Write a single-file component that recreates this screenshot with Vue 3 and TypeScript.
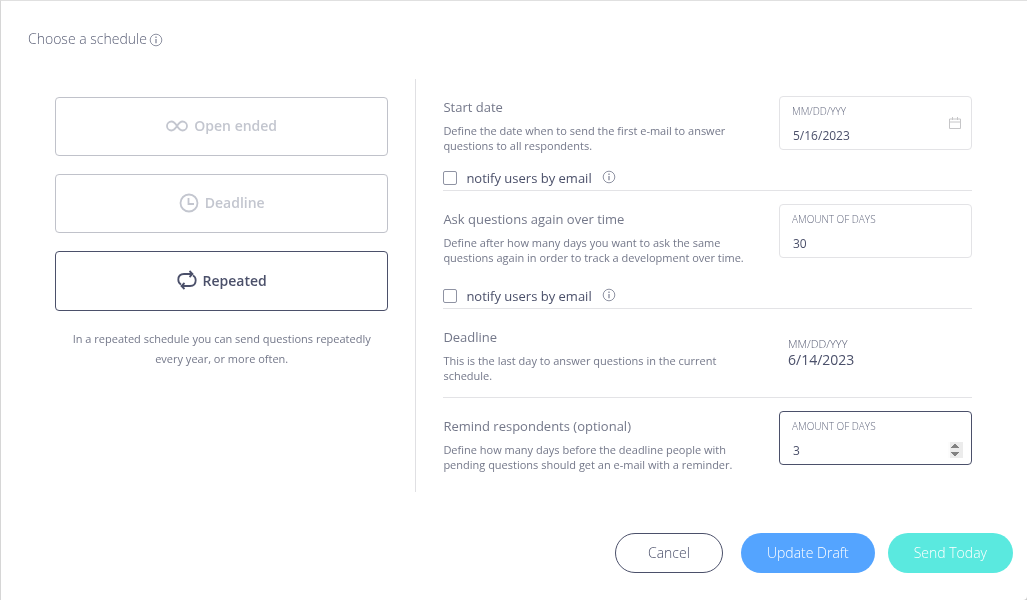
<script setup lang="ts">
import { ref } from 'vue'

type Schedule = 'open' | 'deadline' | 'repeated'

const schedules: { id: Schedule; label: string }[] = [
  { id: 'open', label: 'Open ended' },
  { id: 'deadline', label: 'Deadline' },
  { id: 'repeated', label: 'Repeated' },
]

const selected = ref<Schedule>('repeated')
const startDate = ref('5/16/2023')
const repeatDays = ref(30)
const remindDays = ref(3)
const notifyStart = ref(false)
const notifyRepeat = ref(false)
</script>

<template>
  <main class="dialog">
    <header class="header">
      <h1>Choose a schedule</h1>
      <svg class="info" viewBox="0 0 14 14" aria-hidden="true">
        <circle cx="7" cy="7" r="5.8" />
        <path d="M7 6v4.200M7 3.600v1.400" />
      </svg>
    </header>

    <div class="columns">
      <section class="choices">
        <button
          v-for="item in schedules"
          :key="item.id"
          type="button"
          class="choice"
          :class="{ active: selected === item.id }"
          :aria-pressed="selected === item.id"
          @click="selected = item.id"
        >
          <svg v-if="item.id === 'open'" class="infinity" viewBox="0 0 22 12" aria-hidden="true">
            <path d="M11 6C9.200 3.200 7.800 1.500 5.500 1.500a4.500 4.500 0 0 0 0 9C7.800 10.500 9.200 8.800 11 6S14.200 1.500 16.500 1.500a4.500 4.500 0 0 1 0 9C14.200 10.500 12.800 8.800 11 6z" />
          </svg>
          <svg v-else-if="item.id === 'deadline'" class="glyph" viewBox="0 0 20 20" aria-hidden="true">
            <circle cx="10" cy="10" r="8.500" />
            <path d="M9.500 5v6h5.500" />
          </svg>
          <svg v-else class="glyph" viewBox="0 0 20 20" aria-hidden="true">
            <path d="M4 14.500C2.200 13.500 1.300 12 1.300 9.800C1.300 6.200 3.500 4 7 4h8.500M12.500 1l3 3l-3 3" />
            <path d="M16 5.500C17.800 6.500 18.700 8 18.700 10.200C18.700 13.800 16.500 16 13 16H4.500M7.500 13l-3 3l3 3" />
          </svg>
          <span>{{ item.label }}</span>
        </button>
        <p class="explain">In a repeated schedule you can send questions repeatedly every year, or more often.</p>
      </section>

      <section class="settings">
        <div class="setting first">
          <div class="copy">
            <h2>Start date</h2>
            <p>Define the date when to send the first e-mail to answer questions to all respondents.</p>
          </div>
          <div class="field">
            <label for="start-date">MM/DD/YYY</label>
            <input id="start-date" v-model="startDate" type="text" />
            <svg class="calendar" viewBox="0 0 12 12" aria-hidden="true">
              <path d="M0.500 2h11v9.500h-11zM0.500 5h11M3.500 0v3M8.500 0v3" />
            </svg>
          </div>
          <div class="notify">
            <input id="notify-start" v-model="notifyStart" type="checkbox" />
            <label for="notify-start">notify users by email</label>
            <svg class="info" viewBox="0 0 14 14" aria-hidden="true">
              <circle cx="7" cy="7" r="5.8" />
              <path d="M7 6v4.200M7 3.600v1.400" />
            </svg>
          </div>
        </div>

        <div class="setting second">
          <div class="copy">
            <h2>Ask questions again over time</h2>
            <p>Define after how many days you want to ask the same questions again in order to track a development over time.</p>
          </div>
          <div class="field">
            <label for="repeat-days">AMOUNT OF DAYS</label>
            <input id="repeat-days" v-model="repeatDays" type="number" />
          </div>
          <div class="notify">
            <input id="notify-repeat" v-model="notifyRepeat" type="checkbox" />
            <label for="notify-repeat">notify users by email</label>
            <svg class="info" viewBox="0 0 14 14" aria-hidden="true">
              <circle cx="7" cy="7" r="5.8" />
              <path d="M7 6v4.200M7 3.600v1.400" />
            </svg>
          </div>
        </div>

        <div class="setting">
          <div class="copy">
            <h2>Deadline</h2>
            <p>This is the last day to answer questions in the current schedule.</p>
          </div>
          <div class="result">
            <span class="format">MM/DD/YYY</span>
            <span>6/14/2023</span>
          </div>
        </div>

        <div class="setting last">
          <div class="copy">
            <h2>Remind respondents (optional)</h2>
            <p>Define how many days before the deadline people with pending questions should get an e-mail with a reminder.</p>
          </div>
          <div class="field focused">
            <label for="remind-days">AMOUNT OF DAYS</label>
            <input id="remind-days" v-model="remindDays" type="number" />
          </div>
        </div>
      </section>
    </div>

    <footer class="actions">
      <button type="button" class="cancel">Cancel</button>
      <button type="button" class="draft">Update Draft</button>
      <button type="button" class="send">Send Today</button>
    </footer>
  </main>
</template>

<style>
body {
  background: #c8c8c8;
}
</style>

<style scoped>
.dialog {
  box-sizing: border-box;
  min-height: 100vh;
  padding: 28px 14px 27px 27px;
  border-top: 1px solid #e0e0e0;
  border-left: 1px solid #d6d6d6;
  border-bottom-right-radius: 4px;
  background: #fff;
  font-family: "Open Sans", "Noto Sans", sans-serif;
  color: #74788a;
}

h1,
h2,
p {
  margin: 0;
  font-weight: 400;
}

button,
input {
  font-family: inherit;
}

.header {
  display: flex;
  align-items: center;
  gap: 2px;
  height: 20px;
}

h1 {
  color: #5c6178;
  font-size: 14px;
  font-weight: 300;
  line-height: 20px;
}

.info {
  width: 14px;
  height: 14px;
  flex: none;
  fill: none;
  stroke: #8f93a3;
  stroke-width: 1;
}

.info path {
  stroke-width: 1.4;
}

.header .info {
  margin-top: 2px;
}

.columns {
  display: grid;
  grid-template-columns: 2fr 3fr;
  margin: 30px 14px 0 0;
}

.choices {
  padding: 18px 27px 0;
  border-right: 1px solid #e0e0e3;
}

.choice {
  display: flex;
  align-items: center;
  justify-content: center;
  gap: 6px;
  width: 100%;
  height: 59px;
  margin-bottom: 18px;
  padding: 0 0 2px;
  border: 1px solid #c0c2ca;
  border-radius: 4px;
  background: #fff;
  color: #c3c6cf;
  font-size: 14px;
  font-weight: 600;
  cursor: pointer;
}

.choice.active {
  height: 60px;
  border-color: #4b506a;
  color: #4b506a;
}

.choice svg {
  fill: none;
  stroke: currentColor;
  stroke-width: 1.8;
}

.infinity {
  width: 22px;
  height: 12px;
}

.glyph {
  width: 20px;
  height: 20px;
}

.explain {
  padding: 0 12px;
  font-size: 11px;
  line-height: 20px;
  text-align: center;
}

.settings {
  padding: 0 27px;
}

.setting {
  display: grid;
  grid-template-columns: 1fr 193px;
  column-gap: 24px;
  align-items: start;
  box-sizing: border-box;
  min-height: 89px;
  border-bottom: 1px solid #e3e3e6;
}

.setting.last {
  min-height: 94px;
  border-bottom: 0;
}

.copy {
  padding-top: 18px;
}

h2 {
  font-size: 13px;
  line-height: 20px;
}

.copy p {
  margin: 6px 0 1px;
  font-size: 11px;
  line-height: 15px;
}

.field {
  position: relative;
  box-sizing: border-box;
  height: 54px;
  margin-top: 13px;
  padding: 8px 8px 0 12px;
  border: 1px solid #e3e3e6;
  border-radius: 4px;
}

.first .field {
  margin-top: 17px;
}

.field.focused {
  border-color: #4b506a;
}

.field label {
  display: block;
  color: #666b80;
  font-size: 10px;
  font-weight: 300;
  line-height: 13px;
}

.field input {
  display: block;
  box-sizing: border-box;
  width: 100%;
  height: 18px;
  margin-top: 8px;
  padding: 0 0 0 1px;
  border: 0;
  outline: 0;
  background: transparent;
  color: #4b506a;
  font-size: 12px;
}

.field.focused input {
  background: linear-gradient(#efefef, #efefef) right center / 13px 16px no-repeat;
}

.focused input::-webkit-inner-spin-button {
  height: 16px;
  opacity: 1;
  mix-blend-mode: multiply;
}

.calendar {
  position: absolute;
  top: 20px;
  right: 10px;
  width: 12px;
  height: 12px;
  fill: none;
  stroke: #c6c6c8;
}

.notify {
  grid-column: 1 / -1;
  display: flex;
  align-items: center;
  height: 20px;
  margin-top: 14px;
  padding-bottom: 2px;
  font-size: 13px;
  color: #4b506a;
}

.second .notify {
  margin-top: 20px;
}

.notify input {
  appearance: none;
  box-sizing: border-box;
  width: 14px;
  height: 14px;
  margin: 0 9px 0 0;
  border: 1px solid #8f93a3;
  border-radius: 2px;
}

.notify input:checked {
  background: #4b506a;
}

.notify .info {
  margin: 0 0 3px 10px;
}

.result {
  display: grid;
  padding: 27px 0 0 9px;
  color: #4b506a;
  font-size: 14px;
  line-height: 16px;
}

.format {
  color: #5c6178;
  font-size: 11px;
  font-weight: 300;
}

.actions {
  display: flex;
  justify-content: flex-end;
  gap: 13px;
  margin-top: 41px;
}

.actions button {
  height: 40px;
  padding: 0 26px 1px;
  border: 0;
  border-radius: 20px;
  color: #fff;
  font-size: 14px;
  font-weight: 300;
  cursor: pointer;
}

.actions .cancel {
  margin-right: 5px;
  padding: 0 32px 1px;
  border: 1px solid #4b506a;
  background: #fff;
  color: #4b506a;
}

.actions .draft {
  background: #54a4ff;
}

.actions .send {
  background: #5ae9df;
}
</style>
